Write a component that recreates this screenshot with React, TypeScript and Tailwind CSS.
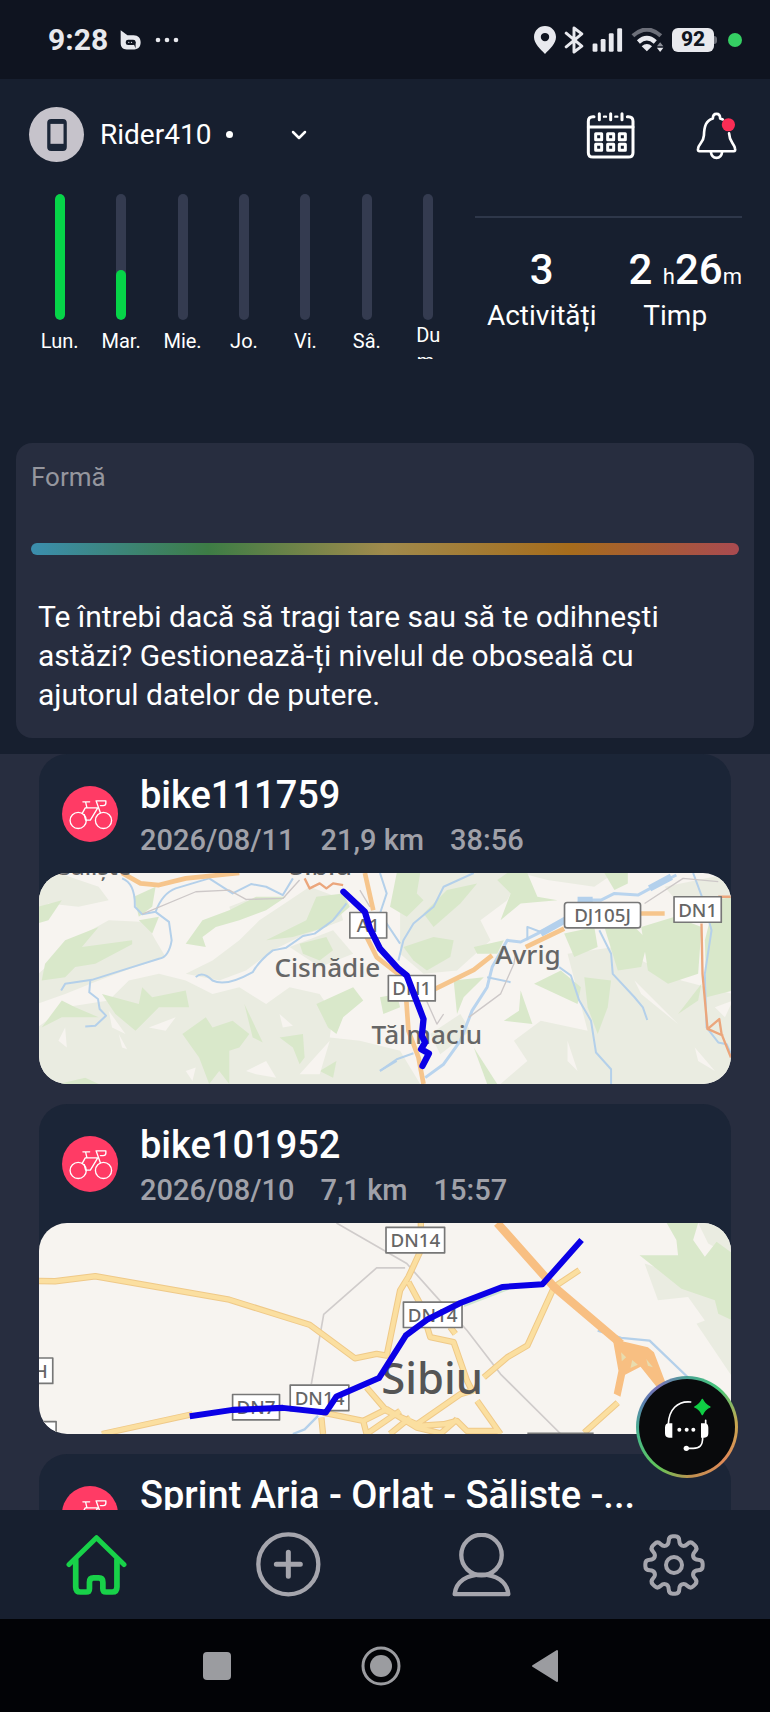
import type { ReactNode } from "react"

const days = [
  { label: "Lun.", progress: 100 },
  { label: "Mar.", progress: 40 },
  { label: "Mie.", progress: 0 },
  { label: "Jo.", progress: 0 },
  { label: "Vi.", progress: 0 },
  { label: "Sâ.", progress: 0 },
  { label: "Dum.", progress: 0 },
]

function StatusBar() {
  return (
    <div className="flex h-[79px] shrink-0 items-center justify-between bg-[#0f1420] pl-12 pr-7 text-[#e8e9ee]">
      <div className="flex items-center">
        <span className="text-[30px] leading-none font-bold">9:28</span>
        <svg viewBox="0 0 62 58" className="ml-3 h-5 w-[21px]" fill="currentColor">
          <path d="M2 0 L22 15 H40 C54 15 61 24 61 36 C61 49 54 57 42 57 H20 C8 57 2 50 2 38Z" />
          <rect x="17" y="28" width="29" height="16" rx="7" fill="#0f1420" />
          <path d="M38 34 H46 V54 Z" fill="#0f1420" />
          <circle cx="26" cy="36" r="2" />
          <circle cx="34" cy="36" r="2" />
        </svg>
        <svg viewBox="0 0 24 8" className="ml-[14px] h-2 w-6" fill="currentColor">
          <circle cx="3" cy="4" r="2.3" />
          <circle cx="12" cy="4" r="2.3" />
          <circle cx="21" cy="4" r="2.3" />
        </svg>
      </div>
      <div className="flex items-center gap-2">
        <svg viewBox="0 0 68 86" className="h-7 w-[22px]" fill="currentColor">
          <path fillRule="evenodd" d="M34 0 C15 0 0 15 0 34 C0 55 20 72 34 86 C48 72 68 55 68 34 C68 15 53 0 34 0Z M34 21 a13 13 0 1 1 0 26 a13 13 0 1 1 0 -26Z" />
        </svg>
        <svg viewBox="0 0 60 86" className="h-7 w-5" fill="none" stroke="currentColor" strokeWidth="9" strokeLinejoin="round" strokeLinecap="round">
          <path d="M6 22 L54 62 L30 80 V6 L54 24 L6 64" />
        </svg>
        <svg viewBox="0 0 92 74" className="h-6 w-[31px]" fill="currentColor">
          <rect x="0" y="48" width="15" height="25" rx="4" />
          <rect x="25" y="34" width="15" height="39" rx="4" />
          <rect x="50" y="16" width="15" height="57" rx="4" />
          <rect x="76" y="1" width="15" height="72" rx="4" />
        </svg>
        <svg viewBox="0 0 100 74" className="h-6 w-[33px]" fill="none">
          <path d="M5 24 Q48 -14 91 24" stroke="#6c6f79" strokeWidth="13" />
          <path d="M22 43 Q48 20 74 43" stroke="currentColor" strokeWidth="14" />
          <path d="M32 56 Q48 42 64 56 L48 72Z" fill="currentColor" />
          <path d="M79 56 L89 44 L99 56Z" fill="#8a8d96" />
          <path d="M79 61 L89 74 L99 61Z" fill="currentColor" />
        </svg>
        <div className="flex items-center">
          <span className="flex h-6 w-[42px] items-center justify-center rounded-md bg-[#e8e9ee] text-[21px] leading-none font-extrabold text-[#0f1420]">92</span>
          <span className="h-2 w-[3px] rounded-r bg-[#6c6f79]" />
        </div>
        <span className="ml-[3px] size-[14px] rounded-full bg-[#35cf63]" />
      </div>
    </div>
  )
}

function CalendarIcon() {
  return (
    <svg viewBox="0 0 156 150" className="h-[50px] w-[52px]" fill="none" stroke="currentColor" strokeWidth="9" strokeLinecap="round">
      <path d="M27 20 H24 Q10 20 10 34 V128 Q10 141 24 141 H130 Q144 141 144 128 V34 Q144 20 130 20 H127" />
      <path d="M43 11 V29 M77 11 V29 M111 11 V29 M10 51 H144" />
      <path d="M57 20 H63 M91 20 H97" strokeWidth="7" />
      {[41, 77, 112].map((x) => (
        <g key={x} strokeLinejoin="round">
          <rect x={x - 9} y="71" width="18" height="18" />
          <rect x={x - 9} y="103" width="18" height="18" />
        </g>
      ))}
    </svg>
  )
}

function BellIcon() {
  return (
    <svg viewBox="0 0 130 150" className="h-[50px] w-[43px]" fill="none" stroke="currentColor" strokeWidth="8" strokeLinecap="round" strokeLinejoin="round">
      <path d="M84 28 L76 25 Q76 11 65 11 Q54 11 54 25 C33 32 28 48 27 76 C26 98 11 100 9 117 Q8 124 14 124 H117 Q123 124 121 116 C118 100 104 96 103 70" />
      <path d="M48 126 Q50 144 65 144 Q80 144 82 126" />
      <circle cx="101" cy="44" r="20" fill="#fb2d55" stroke="none" />
    </svg>
  )
}

function ProfileRow() {
  return (
    <header className="flex items-center justify-between pl-[29px] pr-8">
      <button className="flex items-center">
        <span className="flex size-[55px] items-center justify-center rounded-full bg-[#c6c3cb]">
          <svg viewBox="0 0 60 98" className="h-8 w-5">
            <rect width="60" height="98" rx="12" fill="#1b2638" />
            <rect x="10" y="15" width="40" height="61" fill="#c6c3cb" />
          </svg>
        </span>
        <span className="ml-4 text-[28px] leading-9">Rider410</span>
        <span className="ml-[15px] size-[7px] rounded-full bg-white" />
        <svg viewBox="0 0 16 10" className="ml-[58px] h-[10px] w-4" fill="none" stroke="currentColor" strokeWidth="2.5" strokeLinecap="round" strokeLinejoin="round">
          <path d="M2 2 L8 8 L14 2" />
        </svg>
      </button>
      <div className="flex items-center gap-[58px]">
        <button aria-label="Calendar">
          <CalendarIcon />
        </button>
        <button aria-label="Notificări">
          <BellIcon />
        </button>
      </div>
    </header>
  )
}

function WeekSummary() {
  return (
    <section className="flex items-start pl-[29px] pr-7">
      <div className="flex w-[430px] shrink-0">
        {days.map((day) => (
          <div key={day.label} className="flex flex-1 flex-col items-center">
            <div className="flex h-[126px] w-[10px] flex-col justify-end overflow-hidden rounded-full bg-[#343b50]">
              <div className="rounded-full bg-[#06d448]" style={{ height: `${day.progress}%` }} />
            </div>
            <div className="mt-[2px] flex h-[37px] w-10 flex-col overflow-hidden text-center text-xl leading-[26px] break-all">
              <span className={day.label === "Dum." ? "" : "my-auto"}>{day.label}</span>
            </div>
          </div>
        ))}
      </div>
      <div className="ml-4 flex-1">
        <div className="mt-[22px] h-[2px] bg-[#2e374a]" />
        <div className="mt-6 flex text-center">
          <div className="flex-1">
            <p className="h-14 text-[42px] leading-[56px] font-medium">3</p>
            <p className="text-[28px] leading-9">Activități</p>
          </div>
          <div className="flex-1">
            <p className="h-14 text-right text-[42px] leading-[56px] font-medium whitespace-nowrap">
              2 <span className="text-[22px] leading-none font-normal">h</span>26<span className="text-[22px] leading-none font-normal">m</span>
            </p>
            <p className="text-[28px] leading-9">Timp</p>
          </div>
        </div>
      </div>
    </section>
  )
}

function FormCard() {
  return (
    <section className="mx-4 mt-auto mb-4 rounded-2xl bg-[#272d3f] px-[15px] pt-4 pb-6">
      <h2 className="text-[26px] leading-9 text-[#95969e]">Formă</h2>
      <div className="mt-12 h-3 rounded-full bg-[linear-gradient(90deg,#3b8eae_0%,#3d7c45_25%,#a08a4c_50%,#a66c1c_76%,#a94a50_100%)]" />
      <p className="mt-[42px] px-[7px] text-[30px] leading-[39px]">
        Te întrebi dacă să tragi tare sau să te odihnești astăzi? Gestionează-ți nivelul de oboseală cu ajutorul datelor de putere.
      </p>
    </section>
  )
}

function BikeIcon() {
  return (
    <svg viewBox="188 137 166 166" className="size-[56px] shrink-0">
      <circle cx="271" cy="220" r="83" fill="#ff3b65" />
      <g fill="none" stroke="#fff" strokeWidth="4" strokeLinecap="round" strokeLinejoin="round">
        <circle cx="236" cy="239" r="24" />
        <circle cx="311" cy="239" r="24" />
        <path d="M250 184 H270 M258 185 L262 202 M248 218 L257 202 H294 L272 238 H258 L254 222" />
        <path d="M302 217 L289 181 H318 V188 Q318 195 310 195 H302" />
      </g>
    </svg>
  )
}

type RoadSignProps = { x: number; y: number; w: number; label: string; rx?: number }

function RoadSign({ x, y, w, label, rx = 0 }: RoadSignProps) {
  return (
    <g>
      <rect x={x} y={y} width={w} height="76" rx={rx} fill="#fff" stroke="#777" strokeWidth="5" />
      <text x={x + w / 2} y={y + 59} textAnchor="middle" fontSize="56" fontWeight="500" fill="#666">
        {label}
      </text>
    </g>
  )
}

function MapFrame({ label, children }: { label: string; children: ReactNode }) {
  return (
    <svg
      role="img"
      aria-label={label}
      viewBox="117 399 2076 630"
      preserveAspectRatio="xMidYMid slice"
      className="h-[211px] w-full rounded-[28px] bg-[#f7f4f0] font-['Noto_Sans',sans-serif]"
      strokeLinejoin="round"
    >
      {children}
    </svg>
  )
}

function TalmaciuMap() {
  return (
    <MapFrame label="Cisnădie – Tălmaciu">
      {/* hills */}
      <g fill="#eaece1">
        <path d="M117 399 H180 L300 440 L330 480 L240 500 L150 490 L117 520Z" />
        <path d="M120 700 L240 590 L330 540 L440 545 L470 600 L500 650 L380 690 L300 720 L200 760 L117 790Z" />
        <path d="M117 860 L200 800 L330 780 L390 720 L480 700 L560 720 L640 760 L720 740 L800 790 L870 740 L960 760 L1000 820 L990 890 L1080 900 L1200 930 L1260 1029 H117Z" />
        <path d="M560 700 L640 660 L720 600 L780 540 L870 480 L930 440 L1010 470 L1030 540 L900 590 L820 630 L740 690 L660 720Z" />
        <path d="M870 620 L1000 570 L1060 640 L960 680Z" />
        <path d="M690 500 L740 480 L760 500 L700 530Z" />
      </g>
      <g fill="#d9e8ca">
        <path d="M117 500 L190 480 L150 540 L117 550Z" />
        <path d="M405 470 L470 440 L460 500 L420 530Z" />
        <path d="M140 670 L200 600 L300 560 L250 620 L400 600 L400 612 L290 670 L230 680 L200 710 L130 720Z" />
        <path d="M420 540 L480 530 L460 580Z" />
        <path d="M560 610 L610 540 L690 510 L770 470 L860 470 L800 510 L720 540 L650 560 L610 590 L620 620Z" />
        <path d="M950 470 L1030 460 L1050 500 L980 560 L880 590 L800 600 L920 540Z" />
        <path d="M900 610 L980 590 L1000 630 L960 660 L910 640Z" />
        <path d="M130 860 L190 780 L230 800 L300 830 L190 830Z" />
        <path d="M310 760 L420 790 L430 740 L460 770 L560 750 L570 800 L480 800 L410 870 L350 820Z" />
        <path d="M550 880 L620 830 L640 860 L700 840 L750 880 L720 920 L690 930 L690 1029 L660 990 L630 1029 L600 950Z" />
        <path d="M735 790 L790 905 L760 890Z" />
        <path d="M840 890 L910 880 L915 950 L900 970 L880 920Z" />
        <path d="M950 790 L1060 740 L1090 780 L1030 830 L1010 880 L985 860Z" />
        <path d="M180 1029 L260 1010 L300 1029Z" />
        <path d="M960 990 L1010 960 L1000 1010Z" />
      </g>
      <g fill="#f7f4f0">
        <path d="M180 900 L200 860 L205 920Z M360 880 L385 925 L370 920Z M450 860 L530 830 L500 870Z M840 820 L880 855 L850 860Z M740 990 L800 960 L830 1010 L770 1000Z M900 1000 L990 900 L960 1000Z M560 990 L590 980 L580 1020Z M330 810 L380 880 L340 860Z" />
      </g>
      <g transform="translate(1140 0)">
        <g fill="#eaece1">
          <path d="M60 399 H420 L380 480 L300 540 L330 600 L230 690 L130 700 L60 640Z" />
          <path d="M420 399 H700 L640 440 L500 420Z" />
          <path d="M560 640 L700 620 L900 720 L1053 760 V1029 H360 L440 960 L400 900 L480 840 L620 870Z" />
          <path d="M150 880 L240 820 L270 870 L180 940Z" />
          <path d="M850 440 L1053 399 V470 L900 500Z" />
        </g>
        <g fill="#d9e8ca">
          <path d="M50 399 H120 L110 460 L130 480 L80 530 L30 500Z" />
          <path d="M130 520 L200 450 L290 430 L240 490 L160 560Z" />
          <path d="M70 620 L160 590 L220 600 L210 650 L140 690 L100 660Z" />
          <path d="M380 399 H440 L470 470 L530 480 L420 490 L360 540 L390 460 L350 420Z" />
          <path d="M280 620 L370 600 L350 640 L290 640Z" />
          <path d="M670 399 H740 L740 430 L700 450Z" />
          <path d="M550 580 L640 560 L650 620 L580 650Z" />
          <path d="M670 560 L760 560 L800 600 L780 680 L710 690Z" />
          <path d="M780 560 L880 530 L960 560 L950 700 L860 730 L800 690Z" />
          <path d="M1000 480 L1053 470 V750 L975 770 L970 600Z" />
          <path d="M460 730 L540 690 L600 740 L590 790Z" />
          <path d="M610 710 L690 720 L680 800 L650 880 L620 800Z" />
          <path d="M370 840 L415 810 L420 750 L455 850Z" />
          <path d="M220 720 L310 710 L250 770 L230 820Z" />
          <path d="M280 920 L350 1029 H320Z" />
          <path d="M890 820 L960 730 L950 780Z" />
          <path d="M0 770 L50 760 L60 800 L10 820Z" />
        </g>
        <path d="M760 720 L890 850 L780 760Z M940 920 L1000 990 L950 960Z M560 900 L590 990 L560 960Z M1000 800 L1053 780 L1030 830Z" fill="#f7f4f0" />
      </g>
      {/* rivers */}
      <g fill="none" stroke="#b4d0ea" strokeWidth="6">
        <path d="M370 415 Q410 430 408 500 L430 522 L470 515 Q490 460 530 445 L630 415 L700 460 L755 432 L800 440 L850 465 L880 415" />
        <path d="M470 515 L510 545 L518 600 Q510 650 480 655 L400 680 L280 718 L200 730 L188 750" />
        <path d="M275 720 L272 755 L298 775 L303 805 L322 825 L290 855 L260 857" />
        <path d="M590 710 Q610 690 640 720 Q680 740 760 695 Q780 660 820 630 L860 622 L910 587 L945 580 L1000 540 L1040 490" />
        <path d="M1140 399 L1160 460 L1140 520 L1200 610 M1140 990 L1190 960" />
        <path d="M1420 399 L1330 440 L1300 500 L1240 550 L1210 600 L1195 660" />
        <path d="M1140 990 L1190 955 L1240 937" />
        <path d="M1795 570 L1830 640 L1835 700 L1900 770 L1925 800 L1938 838" />
        <path d="M1675 680 L1710 705 L1735 780 L1770 840 L1785 935 L1830 985 V1029" />
        <path d="M2075 399 L2105 480 L2130 570 L2110 700 L2115 860 L2150 905 L2175 910 L2193 950" />
      </g>
      <path d="M1275 1010 L1330 970 L1380 900 L1415 810 L1460 740 L1475 680 L1520 600 L1560 605 L1600 585 L1690 540 L1740 480 L1800 480 L1840 460 L1910 465 L1975 430 L2025 405" fill="none" stroke="#b9d4ee" strokeWidth="9" />
      <path d="M1620 580 L1700 535 M1730 480 H1775 M1945 445 L2010 410" fill="none" stroke="#b3d0ec" strokeWidth="20" />
      <path d="M1580 600 V560 L1620 575 M1460 710 L1530 725" fill="none" stroke="#b4d0ea" strokeWidth="6" />
      {/* railways */}
      <path d="M430 522 L590 455 L690 450 L740 478 L850 475 L900 420 M1405 830 L1500 760 L1540 670 L1545 640 M1930 490 L2045 415 L2150 425 M1080 450 L1110 500 M1270 760 L1310 850 L1330 820" fill="none" stroke="#cdc8c8" strokeWidth="4" />
      {/* roads */}
      <g fill="none" stroke="#f6c58c" strokeWidth="14">
        <path d="M370 399 L425 430 L480 435 L560 415 L720 399" />
        <path d="M1095 399 L1120 510" />
        <path d="M1090 570 L1130 650 L1200 705 L1218 770 L1225 870 L1255 950 L1270 1029" />
        <path d="M1305 745 L1420 688 L1475 645 M1575 620 L1690 565 M1915 520 H1990" />
      </g>
      <g fill="none" stroke="#eba67c" strokeWidth="7">
        <path d="M915 415 L930 445 L960 430 L980 445 L1000 430 L1030 435" />
        <path d="M2100 550 L2103 700 L2118 865 L2153 835 L2160 880 L2188 950 M2120 865 L2165 885 M2150 470 H2190" />
      </g>
      {/* places */}
      <g fill="#666" fontSize="78" fontWeight="500">
        <text x="180" y="404" fontSize="70">Săliște</text>
        <text x="870" y="404" fontSize="80">Sibiu</text>
        <text x="825" y="710">Cisnădie</text>
        <text x="1485" y="670">Avrig</text>
        <text x="1115" y="910">Tălmaciu</text>
      </g>
      <RoadSign x={1050} y={517} w={110} label="A1" />
      <RoadSign x={1165} y={705} w={140} label="DN1" />
      <RoadSign x={1691} y={487} w={227} label="DJ105J" rx={8} />
      <RoadSign x={2018} y={470} w={141} label="DN1" />
      {/* track */}
      <path d="M1031 455 L1095 515 L1110 565 L1140 625 L1195 685 L1220 705 L1245 770 L1270 835 L1265 885 L1275 905 L1263 925 L1286 938 L1267 975" fill="none" stroke="#0b00e6" strokeWidth="19" strokeLinecap="round" />
    </MapFrame>
  )
}

function SibiuMap() {
  return (
    <MapFrame label="Sibiu">
      <path d="M1930 520 L1970 630 L2060 620 L2110 690 L2085 700 L2193 860 V600 L2050 560Z M2090 399 H2193 V500 L2120 460Z" fill="#eaece1" />
      <path d="M1996 399 H2090 L2075 450 L2110 500 L2145 455 L2193 490 V690 L2150 670 L2140 630 L2040 595 L1915 495 L2030 495 L2025 450Z" fill="#d9e8ca" />
      {/* railways */}
      <path d="M1010 399 L1220 520 L1300 610 L1400 720 L1500 850 L1680 1029 M1215 533 H1130 L972 672 L935 880" fill="none" stroke="#d0cccb" strokeWidth="5" />
      {/* rivers */}
      <path d="M880 1029 L915 1015 L955 975 M1790 720 L1860 742 L1945 750 L2070 870" fill="none" stroke="#b4d0ea" strokeWidth="7" />
      <path d="M1390 645 L1520 595" fill="none" stroke="#cfe5d3" strokeWidth="10" />
      {/* streets */}
      <g fill="none" stroke="#efc988" strokeWidth="19">
        <path id="streets" d="M117 572 L170 573 L290 558 L690 628 L930 703 L1065 803 L1130 790 L1160 795 L1200 600 L1225 560 L1262 480 L1262 399 M1225 575 L1260 640 L1290 740 L1360 755 L1400 870 L1415 900 L1380 910 L1250 1000 L1160 960 L1100 890 M1365 730 L1350 710 M310 1029 L580 970 M1735 540 L1660 590 L1580 765 L1520 800 L1450 860 M1430 930 L1500 1029 M1850 935 L1750 1025 M970 965 L1090 990 L1160 955 L1250 1010 L1330 1029 M965 980 L970 1029 M1090 990 L1100 1029 L1200 960 M1170 1029 L1230 980 M1250 1005 L1330 1000 L1370 990 L1400 1020 H1490 M1320 1029 L1370 985" />
      </g>
      <use href="#streets" fill="none" stroke="#fbdfa0" strokeWidth="13" />
      <path d="M1490 399 L1660 590 L1860 760" fill="none" stroke="#f8bf82" strokeWidth="25" />
      <path d="M1835 745 L1940 770 L1958 785 L1996 885 L1970 893 L1918 828 L1872 852 L1858 918 L1838 908 L1852 840Z" fill="#f8bf82" />
      <path d="M1860 785 L1875 800 L1862 812Z M1893 808 L1910 822 L1888 832Z M1935 805 L1955 830 L1940 825Z" fill="#e8dcae" />
      <path d="M1580 1027 H1778" stroke="#777" strokeWidth="5" />
      <RoadSign x={1158} y={412} w={175} label="DN14" />
      <RoadSign x={1210} y={635} w={175} label="DN14" />
      <RoadSign x={700} y={911} w={140} label="DN7" />
      <RoadSign x={872} y={883} w={175} label="DN14" />
      <RoadSign x={50} y={802} w={113} label="DH" />
      <RoadSign x={60} y={992} w={113} label="DH" />
      <text x="1144" y="910" fontSize="130" fontWeight="500" fill="#555">Sibiu</text>
      {/* track */}
      <path d="M572 976 L700 957 L850 951 L978 965 L1010 917 L1137 862 L1217 735 L1280 688 L1380 638 L1505 590 L1625 582 L1742 450" fill="none" stroke="#0b00e6" strokeWidth="18" />
    </MapFrame>
  )
}

type ActivityProps = { title: string; meta?: string[]; children?: ReactNode }

function ActivityCard({ title, meta = [], children }: ActivityProps) {
  return (
    <article className="shrink-0 rounded-[28px] bg-[#1b2537]">
      <div className="flex h-[119px] items-center gap-[22px] px-[23px]">
        <BikeIcon />
        <div className="min-w-0 flex-1 pt-[5px]">
          <h3 className="truncate text-[38px] leading-[46px] font-medium">{title}</h3>
          <p className="flex h-[42px] gap-[26px] text-[29px] leading-[44px] font-medium text-[#a0a1a9]">
            {meta.map((item) => (
              <span key={item}>{item}</span>
            ))}
          </p>
        </div>
      </div>
      {children}
    </article>
  )
}

function AssistantButton() {
  return (
    <button
      aria-label="Asistent"
      className="absolute right-8 bottom-8 size-[102px] rounded-full bg-[conic-gradient(#4aa394_0deg,#45c878_40deg,#c8a850_85deg,#e08a58_130deg,#c09050_175deg,#63c558_215deg,#47b98a_260deg,#5a7fb0_300deg,#7a72b8_325deg,#4aa394_360deg)] p-[3px]"
    >
      <span className="block size-full rounded-full bg-[#090a0c]">
        <svg viewBox="9 9 288 288" className="size-full" fill="none" stroke="#fff" strokeWidth="5" strokeLinecap="round">
          <path d="M164 78 C124 74 98 102 97 145" />
          <path d="M209 133 V145 M200 185 C200 210 190 217 172 217 H152" />
          <path d="M109 142 V185 H99 Q87 185 87 172 V155 Q87 142 99 142Z M195 142 V185 H205 Q217 185 217 172 V155 Q217 142 205 142Z" fill="#fff" stroke="none" />
          <g fill="#fff" stroke="none">
            <circle cx="130" cy="161" r="6" />
            <circle cx="152" cy="161" r="6" />
            <circle cx="172" cy="161" r="6" />
            <circle cx="151" cy="217" r="8" />
          </g>
          <path d="M199 70 Q206 86 222 93 Q206 100 199 116 Q192 100 176 93 Q192 86 199 70Z" fill="#10cf45" stroke="#10cf45" strokeWidth="4" strokeLinejoin="round" />
        </svg>
      </span>
    </button>
  )
}

function GearIcon() {
  const tooth: [number, number][] = [
    [-16, -62], [-16, -72], [-16, -86], [-4, -86], [4, -86], [16, -86], [16, -72], [16, -62], [24, -58],
  ]
  const path = Array.from({ length: 8 }, (_, i) => {
    const a = (i * Math.PI) / 4
    const p = tooth.map(([x, y]) => `${(x * Math.cos(a) - y * Math.sin(a)).toFixed(1)} ${(x * Math.sin(a) + y * Math.cos(a)).toFixed(1)}`)
    return `Q${p[0]} ${p[1]} Q${p[2]} ${p[3]} L${p[4]} Q${p[5]} ${p[6]} Q${p[7]} ${p[8]}`
  }).join(" ")

  return (
    <svg viewBox="-93 -93 186 186" className="size-[62px]" fill="none" stroke="currentColor" strokeWidth="12" strokeLinejoin="round">
      <path d={`M-24 -58 ${path}Z`} />
      <circle r="24" />
    </svg>
  )
}

function TabBar() {
  return (
    <nav className="flex h-[109px] shrink-0 bg-[#171f2f] text-[#a5a5ad]">
      <a href="#home" aria-label="Acasă" className="flex flex-1 items-center justify-center text-[#18d149]">
        <svg viewBox="0 0 182 182" className="size-[61px]" fill="none" stroke="currentColor" strokeWidth="15" strokeLinecap="round" strokeLinejoin="round">
          <path d="M9 91 L91 11 L173 91" />
          <path d="M29 78 V158 Q29 173 43 173 H60 Q70 173 70 163 V144 Q70 131 82 131 H98 Q110 131 110 144 V163 Q110 173 120 173 H138 Q152 173 152 158 V78" strokeWidth="17" />
        </svg>
      </a>
      <a href="#add" aria-label="Adaugă" className="flex flex-1 items-center justify-center">
        <svg viewBox="0 0 195 195" className="size-[65px]" fill="none" stroke="currentColor" strokeLinecap="round">
          <circle cx="97" cy="97" r="90" strokeWidth="13" />
          <path d="M97 61 V133 M61 97 H133" strokeWidth="15" />
        </svg>
      </a>
      <a href="#profile" aria-label="Profil" className="flex flex-1 items-center justify-center">
        <svg viewBox="0 0 184 192" className="h-16 w-[61px]" fill="none" stroke="currentColor" strokeWidth="13" strokeLinejoin="round">
          <circle cx="92" cy="66" r="61" />
          <path d="M11 184 H173 C169 145 135 125 92 125 C49 125 15 145 11 184Z" />
        </svg>
      </a>
      <a href="#settings" aria-label="Setări" className="flex flex-1 items-center justify-center">
        <GearIcon />
      </a>
    </nav>
  )
}

function SystemBar() {
  return (
    <div className="flex h-[93px] shrink-0 items-center justify-center gap-[124px] bg-[#020306] pr-2 text-[#9b9ca0]">
      <button aria-label="Recente" className="flex size-10 items-center justify-center">
        <span className="size-7 rounded bg-[#9b9ca0]" />
      </button>
      <button aria-label="Ecran principal" className="flex size-10 items-center justify-center">
        <svg viewBox="0 0 40 40" className="size-10">
          <circle cx="20" cy="20" r="18" fill="none" stroke="currentColor" strokeWidth="3" />
          <circle cx="20" cy="20" r="11" fill="currentColor" />
        </svg>
      </button>
      <button aria-label="Înapoi" className="flex size-10 items-center justify-center">
        <svg viewBox="0 0 28 34" className="h-[34px] w-7" fill="currentColor" stroke="currentColor" strokeWidth="2" strokeLinejoin="round">
          <path d="M26 2 V32 L2 17Z" />
        </svg>
      </button>
    </div>
  )
}

export default function App() {
  return (
    <div className="flex h-screen flex-col overflow-hidden bg-[#171f2f] font-[Roboto,sans-serif] text-white">
      <StatusBar />
      <div className="flex min-h-[675px] shrink-0 flex-col pt-7">
        <ProfileRow />
        <div className="h-8" />
        <WeekSummary />
        <FormCard />
      </div>
      <main className="relative min-h-0 flex-1 overflow-hidden bg-[#272d3f]">
        <div className="flex flex-col gap-5 px-[39px]">
          <ActivityCard title="bike111759" meta={["2026/08/11", "21,9 km", "38:56"]}>
            <TalmaciuMap />
          </ActivityCard>
          <ActivityCard title="bike101952" meta={["2026/08/10", "7,1 km", "15:57"]}>
            <SibiuMap />
          </ActivityCard>
          <ActivityCard title="Sprint Aria - Orlat - Săliste -..." />
        </div>
        <AssistantButton />
      </main>
      <TabBar />
      <SystemBar />
    </div>
  )
}
